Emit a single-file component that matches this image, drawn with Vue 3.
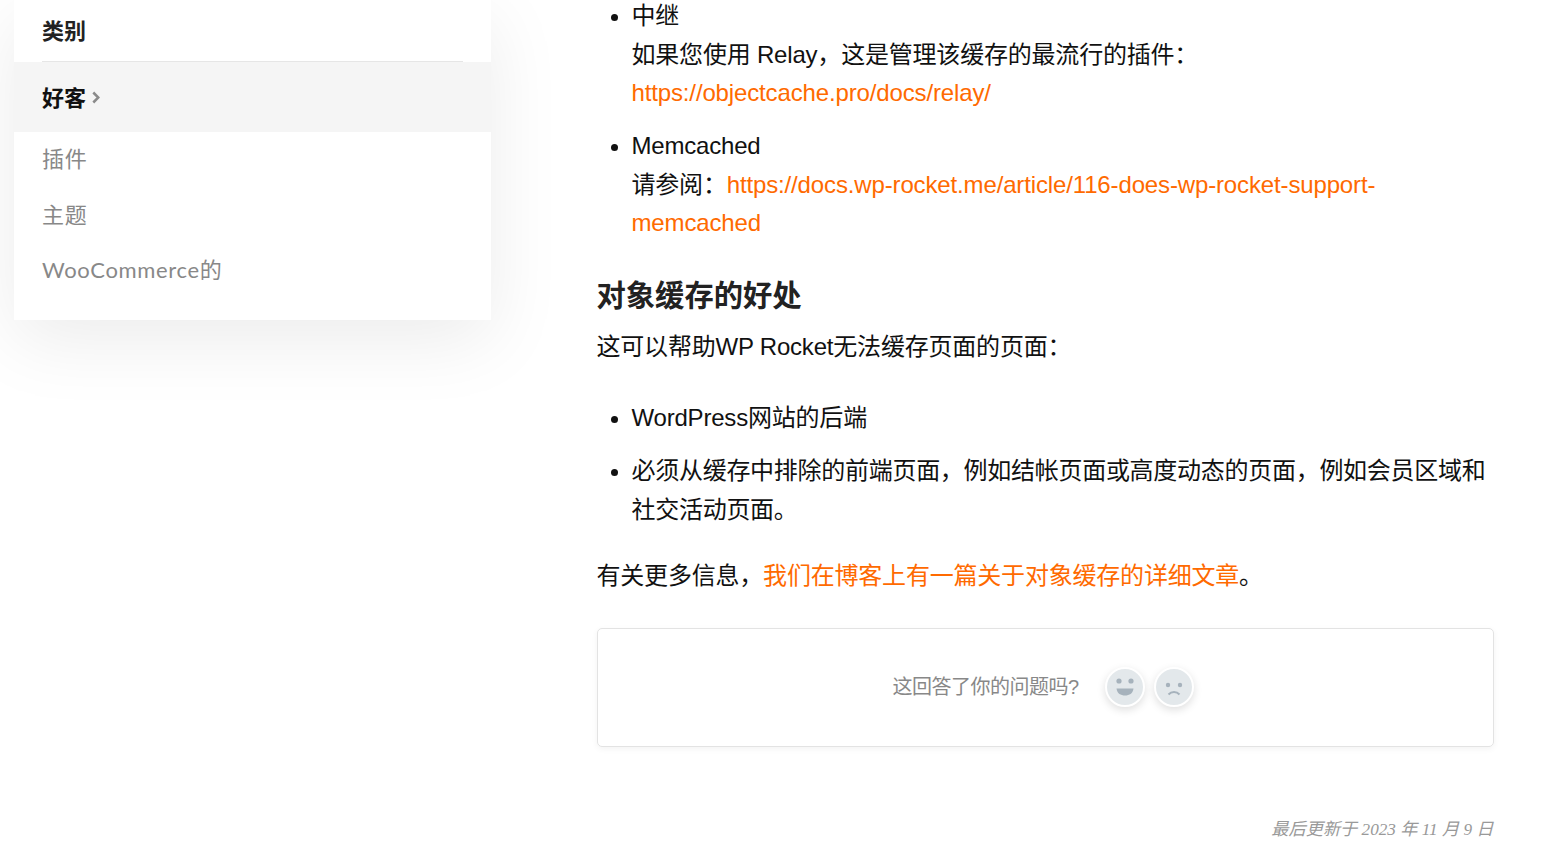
<script setup>
const cats = ['插件', '主题', 'WooCommerce的']
</script>

<template>
  <div class="page">
    <aside class="sidebar">
      <div class="card">
        <div class="title"><span>类别</span></div>
        <div class="active">
          <span>好客</span>
          <svg class="chev" width="9" height="13" viewBox="0 0 9 13"><path d="M2.300 1.500 7.300 6.500 2.300 11.500" fill="none" stroke="#8a8a8a" stroke-width="2.500"/></svg>
        </div>
        <ul class="cats">
          <li v-for="c in cats" :key="c">{{ c }}</li>
        </ul>
      </div>
    </aside>
    <main class="content">
      <ul class="list first">
        <li>中继<br>如果您使用 Relay，这是管理该缓存的最流行的插件：<br><a class="url">https://objectcache.pro/docs/relay/</a></li>
        <li>Memcached<br>请参阅：<a class="url">https://docs.wp-rocket.me/article/116-does-wp-rocket-support-memcached</a></li>
      </ul>
      <h2>对象缓存的好处</h2>
      <p class="intro">这可以帮助WP Rocket无法缓存页面的页面：</p>
      <ul class="list">
        <li>WordPress网站的后端</li>
        <li class="tight">必须从缓存中排除的前端页面，例如结帐页面或高度动态的页面，例如会员区域和社交活动页面。</li>
      </ul>
      <p class="more">有关更多信息，<a>我们在博客上有一篇关于对象缓存的详细文章</a>。</p>
      <section class="feedback">
        <span class="question">这回答了你的问题吗?</span>
        <span class="face">
          <svg width="36" height="36" viewBox="0 0 36 36">
            <circle cx="12" cy="12" r="2.600" fill="#a6b2bc"/>
            <circle cx="24" cy="12" r="2.600" fill="#a6b2bc"/>
            <path d="M9.500 19.500h17c-.6 5-4.200 7-8.500 7s-7.900-2-8.500-7z" fill="#a6b2bc"/>
          </svg>
        </span>
        <span class="face">
          <svg width="36" height="36" viewBox="0 0 36 36">
            <circle cx="12" cy="16" r="2.200" fill="#a6b2bc"/>
            <circle cx="24" cy="16" r="2.200" fill="#a6b2bc"/>
            <path d="M12.500 25.500c3-3.200 8-3.200 11 0" fill="none" stroke="#a6b2bc" stroke-width="2"/>
          </svg>
        </span>
      </section>
      <p class="updated">最后更新于 2023 年 11 月 9 日</p>
    </main>
  </div>
</template>

<style>
html, body { margin: 0; overflow: hidden; background: #fff; }
</style>

<style scoped>
.page {
  display: flex;
  align-items: flex-start;
  height: 843px;
  overflow: hidden;
  background: #fff;
  font-family: "Liberation Sans", "Noto Sans CJK SC", sans-serif;
}
.sidebar { width: 477px; margin-left: 14px; flex: none; }
.card {
  background: #fff;
  box-shadow: 0 20px 70px rgba(0, 0, 0, .08);
  padding-bottom: 21px;
  font-family: Lato, "Noto Sans CJK SC", sans-serif;
  font-size: 22px;
}
.title {
  margin: 0 28px;
  height: 61px;
  line-height: 62px;
  border-bottom: 1px solid #e6e6e6;
  font-weight: 700;
  color: #222;
}
.active {
  height: 70px;
  padding: 0 0 2px 28px;
  box-sizing: border-box;
  display: flex;
  align-items: center;
  gap: 5px;
  background: #f5f5f5;
  font-weight: 700;
  color: #111;
}
.chev { margin-top: 2px; }
.cats { list-style: none; margin: 0; padding: 0 28px; color: #888; letter-spacing: .65px; }
.cats li { height: 55.500px; line-height: 54px; }
.content {
  width: 897px;
  margin-left: 105.500px;
  margin-top: -2.700px;
  flex: none;
  color: #111;
  font-size: 24px;
  line-height: 38.400px;
  letter-spacing: -.200px;
}
a { color: #ff6a00; }
.url { letter-spacing: -.140px; }
.tight { letter-spacing: -.280px; }
.list { margin: 0; padding-left: 35px; }
.list li { margin-bottom: 14.600px; }
.first { margin-bottom: 0; }
h2 {
  margin: 31.700px 0 0;
  font-size: 29.300px;
  line-height: 44px;
  font-weight: 700;
  color: #222;
  letter-spacing: 0;
}
.intro { margin: 10px 0 33px; }
.more { margin: 28px 0 0; }
.feedback {
  margin-top: 32px;
  height: 117px;
  border: 1px solid #e3e3e3;
  border-radius: 5px;
  box-shadow: 0 2px 6px rgba(0, 0, 0, .05);
  display: flex;
  align-items: center;
  justify-content: center;
  padding-left: 5px;
}
.question { color: #888; font-size: 20px; margin-right: 26px; letter-spacing: -.500px; }
.face {
  width: 36px;
  height: 36px;
  border-radius: 50%;
  background: #e3e8eb;
  border: 2px solid #fff;
  box-shadow: 0 3px 8px rgba(0, 0, 0, .13);
  margin-right: 9px;
  display: block;
}
.face svg { display: block; }
.updated {
  margin: 64px 0 0;
  text-align: right;
  font-family: "Liberation Serif", "Noto Sans CJK SC", serif;
  font-style: italic;
  font-size: 17.200px;
  line-height: 38px;
  color: #999;
  letter-spacing: 0;
}
</style>
